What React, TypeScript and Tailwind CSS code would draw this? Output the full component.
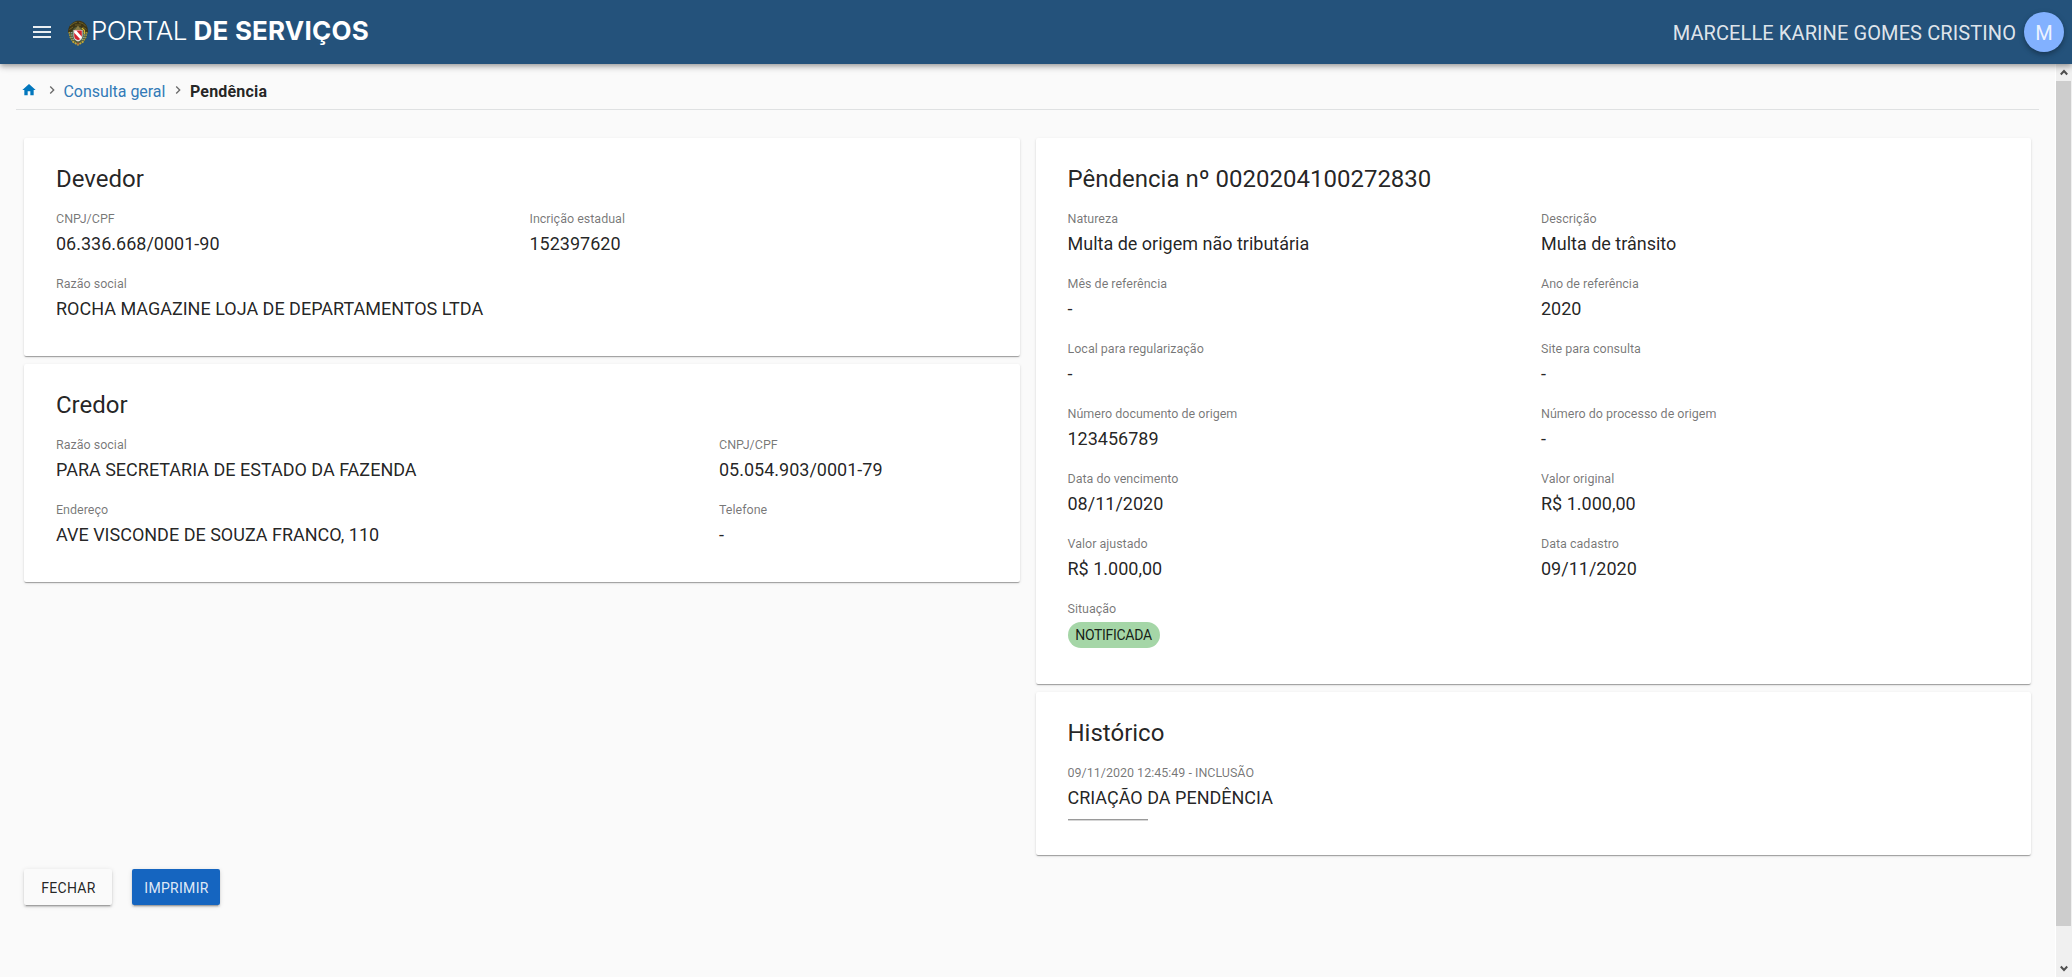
import type { ReactNode } from "react";

const CARD =
  "rounded-[2px] bg-white pt-[25px] pr-8 shadow-[0_2px_1px_-1px_rgba(0,0,0,0.2),0_1px_1px_0_rgba(0,0,0,0.14),0_1px_3px_0_rgba(0,0,0,0.12)]";

const BUTTON =
  "flex h-9 w-[88px] items-center justify-center rounded-[2px] pt-0.5 pl-px text-sm tracking-[0.3px] shadow-[0_3px_1px_-2px_rgba(0,0,0,0.2),0_2px_2px_0_rgba(0,0,0,0.14),0_1px_5px_0_rgba(0,0,0,0.12)]";

function Card({ title, className, children }: { title: string; className: string; children: ReactNode }) {
  return (
    <section className={`${CARD} ${className}`}>
      <h2 className="mb-3.5 text-2xl leading-8">{title}</h2>
      {children}
    </section>
  );
}

function Field({ label, children }: { label: string; children: ReactNode }) {
  return (
    <div className="h-[65px] whitespace-nowrap">
      <div className="mb-px text-[12.5px] leading-5 text-black/55">{label}</div>
      <div className="text-lg leading-7">{children}</div>
    </div>
  );
}

function Crest() {
  return (
    <svg width="20" height="26" viewBox="0 0 20 26">
      <ellipse cx="10" cy="13.500" rx="9" ry="10.500" fill="#4f5a3a" />
      <path d="M0 13C-.2 8 2 4.500 5 2.600C8 .2 13 .2 16 2.600C19 5 20.200 8 20 13L16.500 12L14 8L10 6L6 8L3.500 12Z" fill="#3d3515" />
      <path d="M2 5.800L6 3L9 2.200M11 2.500L15 3.500L18 6.500M1.500 9.500L5 7M15 7L18.500 9.500M7 5H13" stroke="#6e6126" strokeWidth="1" fill="none" />
      <path d="M1.200 12L2.200 17L5 21.500M18.800 12L17.800 17L15 21.500" stroke="#a8983f" strokeWidth="1.600" fill="none" strokeDasharray="1.500 1" />
      <path d="M3.600 12L4 17L6.500 21M16.400 12L16 17L13.500 21" stroke="#86a79c" strokeWidth="1.600" fill="none" strokeDasharray="1.200 1.200" />
      <path d="M14 8L16.500 10.500V14" stroke="#d6b62f" strokeWidth="1.200" fill="none" />
      <path d="M10 5.500L12 8.500L15 11H5L8 8.500Z" fill="#8d7d45" />
      <path d="M5.500 10H14.500V16C14.500 19 12.500 20.500 10 21.500C7.500 20.500 5.500 19 5.500 16Z" fill="#dfe3e2" />
      <path d="M6.200 10.600H13.800V16C13.800 18.300 12 19.500 10 20.300C8 19.500 6.200 18.300 6.200 16Z" fill="#d3222c" />
      <path d="M6.200 10.600H8.300L13.800 16.800V17.600L12.300 19.200L6.200 12.800Z" fill="#fff" />
      <path d="M4.500 21.500L10 24.800L15.500 21.500" stroke="#c3a83a" strokeWidth="1.800" fill="none" strokeDasharray="2 .7" />
      <circle cx="10" cy="23.600" r="1.100" fill="#a2543a" />
    </svg>
  );
}

function Chevron() {
  return (
    <svg width="16" height="16" viewBox="0 0 24 24" fill="#6b6b6b">
      <path d="M8.590 16.590L13.170 12 8.590 7.410 10 6l6 6-6 6z" />
    </svg>
  );
}

const pendencia: [string, string][] = [
  ["Natureza", "Multa de origem não tributária"],
  ["Descrição", "Multa de trânsito"],
  ["Mês de referência", "-"],
  ["Ano de referência", "2020"],
  ["Local para regularização", "-"],
  ["Site para consulta", "-"],
  ["Número documento de origem", "123456789"],
  ["Número do processo de origem", "-"],
  ["Data do vencimento", "08/11/2020"],
  ["Valor original", "R$ 1.000,00"],
  ["Valor ajustado", "R$ 1.000,00"],
  ["Data cadastro", "09/11/2020"],
];

export default function App() {
  return (
    <div className="flex h-[977px] w-[2072px] flex-col overflow-hidden bg-[#fafafa] font-['Roboto',sans-serif] text-black/87">
      <header className="z-10 flex h-16 shrink-0 items-center bg-[#24527b] pr-2 pl-[30px] shadow-[0_2px_4px_-1px_rgba(0,0,0,0.2),0_4px_5px_0_rgba(0,0,0,0.14),0_1px_10px_0_rgba(0,0,0,0.12)]">
        <svg width="24" height="24" viewBox="0 0 24 24" fill="#fff" className="opacity-90">
          <path d="M3 18h18v-2H3v2zm0-5h18v-2H3v2zm0-7v2h18V6H3z" />
        </svg>
        <div className="ml-3.5 flex items-center pt-0.5">
          <Crest />
        </div>
        <h1 className="ml-[3px] flex gap-[6.500px] pb-0.5 font-['Inter',sans-serif] text-[26px] leading-8 whitespace-nowrap text-white">
          <span className="font-[350] tracking-[-0.5px]">PORTAL</span>
          <span className="font-bold tracking-[0.2px]">DE SERVIÇOS</span>
        </h1>
        <div className="ml-auto pt-0.5 text-xl tracking-[0.1px] text-white/87">MARCELLE KARINE GOMES CRISTINO</div>
        <div className="ml-2 flex size-10 items-center justify-center rounded-full bg-[#82b1ff] pt-0.5 text-xl text-white/87 shadow-[0_3px_5px_-1px_rgba(0,0,0,0.2),0_2px_6px_0_rgba(0,0,0,0.2)]">
          M
        </div>
      </header>

      <div className="flex min-h-0 flex-1">
        <main className="w-[2055px] pl-4">
          <nav className="flex h-[46px] w-[2023px] items-center border-b border-[#dfe1e2] pt-2 pl-[5px] text-base">
            <svg width="16" height="16" viewBox="0 0 24 24" fill="#0277bd" className="mb-0.5">
              <path d="M10 20v-6h4v6h5v-8h3L12 3 2 12h3v8z" />
            </svg>
            <span className="mb-0.5 ml-[7px]">
              <Chevron />
            </span>
            <a className="ml-[3.500px] pt-0.5 tracking-[-0.04px] text-[#337ab7]">Consulta geral</a>
            <span className="mb-0.5 ml-[5px]">
              <Chevron />
            </span>
            <span className="ml-[3.500px] pt-0.5 font-bold tracking-[0.2px]">Pendência</span>
          </nav>

          <div className="mt-7 ml-2 flex items-start gap-4">
            <div className="flex w-[996px] flex-col gap-2">
              <Card title="Devedor" className="h-[218px] pl-8">
                <div className="grid grid-cols-[473.500px_1fr]">
                  <Field label="CNPJ/CPF">06.336.668/0001-90</Field>
                  <Field label="Incrição estadual">152397620</Field>
                  <Field label="Razão social">ROCHA MAGAZINE LOJA DE DEPARTAMENTOS LTDA</Field>
                </div>
              </Card>
              <Card title="Credor" className="h-[218px] pl-8">
                <div className="grid grid-cols-[663px_1fr]">
                  <Field label="Razão social">PARA SECRETARIA DE ESTADO DA FAZENDA</Field>
                  <Field label="CNPJ/CPF">05.054.903/0001-79</Field>
                  <Field label="Endereço">AVE VISCONDE DE SOUZA FRANCO, 110</Field>
                  <Field label="Telefone">-</Field>
                </div>
              </Card>
            </div>

            <div className="flex w-[995px] flex-col gap-2">
              <Card title="Pêndencia nº 0020204100272830" className="h-[546px] pl-[31.500px]">
                <div className="grid grid-cols-[473.500px_1fr]">
                  {pendencia.map(([label, value]) => (
                    <Field key={label} label={label}>
                      {value}
                    </Field>
                  ))}
                  <Field label="Situação">
                    <span className="mt-[3px] flex h-[26px] w-[92px] items-center justify-center rounded-full bg-[#a5d6a7] text-sm tracking-[-0.3px]">
                      NOTIFICADA
                    </span>
                  </Field>
                </div>
              </Card>
              <Card title="Histórico" className="h-[163px] pl-[31.500px]">
                <div className="h-14">
                  <Field label="09/11/2020 12:45:49 - INCLUSÃO">CRIAÇÃO DA PENDÊNCIA</Field>
                </div>
                <hr className="h-0.5 w-20 border-t border-b border-t-[#9a9a9a] border-b-[#d6d6d6]" />
              </Card>
            </div>
          </div>

          <div className="mt-3.5 ml-2 flex gap-5">
            <button className={`${BUTTON} bg-[#fafafa]`}>FECHAR</button>
            <button className={`${BUTTON} bg-[#1565c0] text-white/87`}>IMPRIMIR</button>
          </div>
        </main>

        <div className="flex w-[17px] flex-col items-center border-l border-white bg-[#f0f0f0]">
          <div className="flex h-[17px] items-center">
            <svg width="8" height="7" viewBox="0 0 8 7">
              <path d="M0.800 5.500L4 2L7.200 5.500" fill="none" stroke="#505050" strokeWidth="2" />
            </svg>
          </div>
          <div className="mr-px h-[845px] w-[15px] bg-[#cdcdcd]" />
          <div className="mt-auto flex h-[17px] items-center">
            <svg width="8" height="7" viewBox="0 0 8 7">
              <path d="M0.800 1.500L4 5L7.200 1.500" fill="none" stroke="#505050" strokeWidth="2" />
            </svg>
          </div>
        </div>
      </div>
    </div>
  );
}
